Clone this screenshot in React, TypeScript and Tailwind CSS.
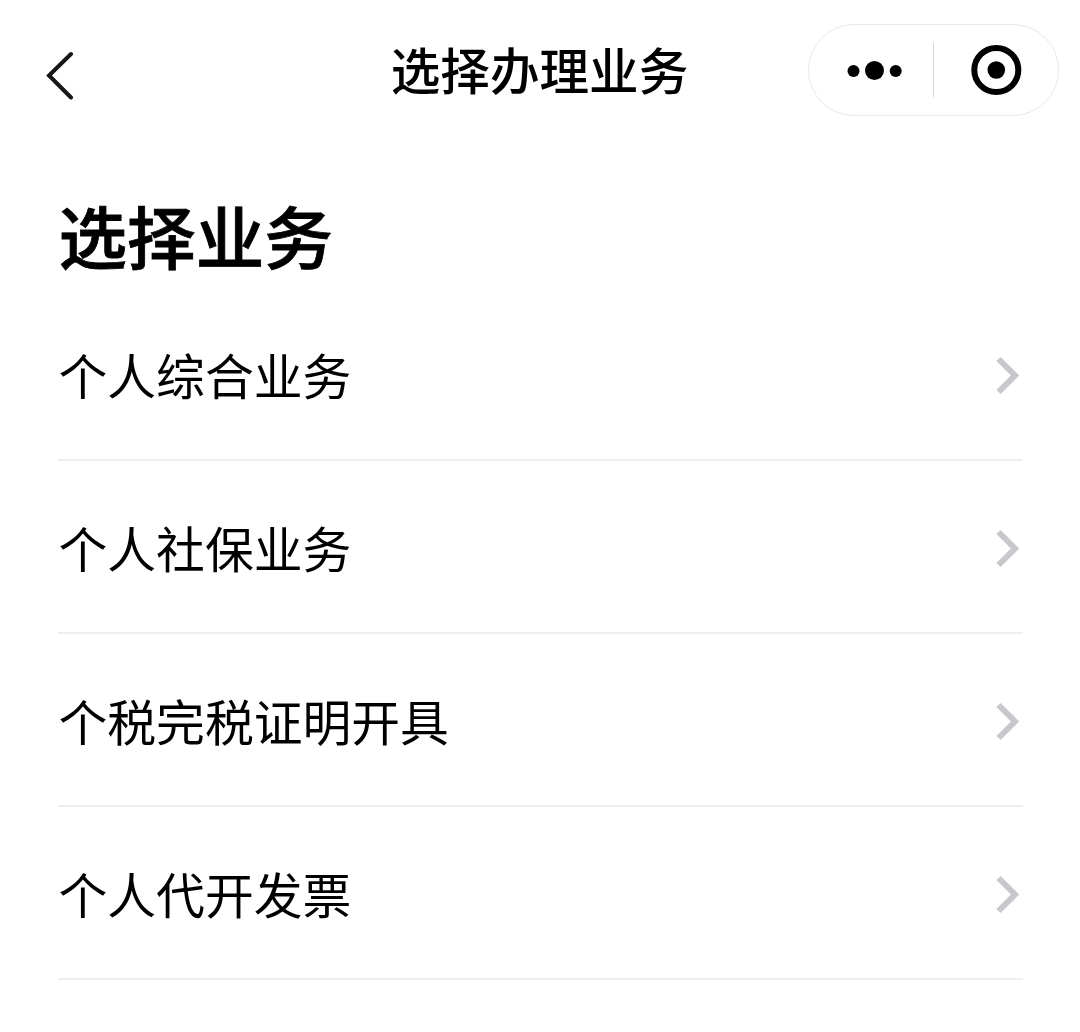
import React from 'react';

interface ServiceItem {
  id: string;
  name: string;
}

const services: ServiceItem[] = [
  { id: 'general', name: '个人综合业务' },
  { id: 'social', name: '个人社保业务' },
  { id: 'tax', name: '个税完税证明开具' },
  { id: 'invoice', name: '个人代开发票' },
];

const NavBar: React.FC = () => (
  <header className="grid h-[140px] grid-cols-[1fr_auto_1fr] items-start">
    <button type="button" className="mt-[50px] ml-[45px] h-[50px] w-[30px]">
      <svg width="30" height="50" viewBox="0 0 30 50" fill="none">
        <path
          d="M26 4L4 25.500L26 47.500"
          stroke="#161616"
          strokeWidth="4"
          strokeLinecap="round"
        />
      </svg>
    </button>
    <h1 className="mt-[32px] mr-px text-[49.600px] leading-[72px] font-medium">
      选择办理业务
    </h1>
    <div className="mt-6 mr-[21px] flex h-[92px] w-[251px] items-center justify-self-end rounded-full border border-[#e8e8e8]">
      <button type="button" className="flex-1">
        <svg width="124" height="90" viewBox="0 0 124 90">
          <circle cx="44.500" cy="46" r="6" />
          <circle cx="65.500" cy="45.500" r="9.500" />
          <circle cx="86.700" cy="46" r="6" />
        </svg>
      </button>
      <span className="h-[54px] w-px bg-[#d4d4d4]" />
      <button type="button" className="flex-1">
        <svg width="124" height="90" viewBox="0 0 124 90">
          <circle cx="62.300" cy="45" r="22" fill="none" stroke="#000" strokeWidth="6" />
          <circle cx="62.300" cy="45" r="8.800" />
        </svg>
      </button>
    </div>
  </header>
);

const App: React.FC = () => {
  return (
    <div className="h-[1032px] overflow-hidden bg-white font-['Noto_Sans_CJK_SC',sans-serif] text-black">
      <NavBar />
      <main className="px-[57.500px] pt-[44px]">
        <h2 className="mb-[4.500px] pl-px text-[68.600px] leading-[100px] font-medium [-webkit-text-stroke:0.8px_black]">
          选择业务
        </h2>
        <ul>
          {services.map((service) => (
            <li
              key={service.id}
              className="flex h-[172.800px] items-center justify-between border-b-2 border-[#eeeeee] pt-[3px]"
            >
              <span className="pb-[2px] pl-px text-[48.800px] leading-[72px]">
                {service.name}
              </span>
              <svg width="30" height="44" viewBox="0 0 30 44" fill="none">
                <path d="M5.500 6L22 22.500L5.500 39" stroke="#c7c7cc" strokeWidth="6" />
              </svg>
            </li>
          ))}
        </ul>
      </main>
    </div>
  );
};

export default App;
